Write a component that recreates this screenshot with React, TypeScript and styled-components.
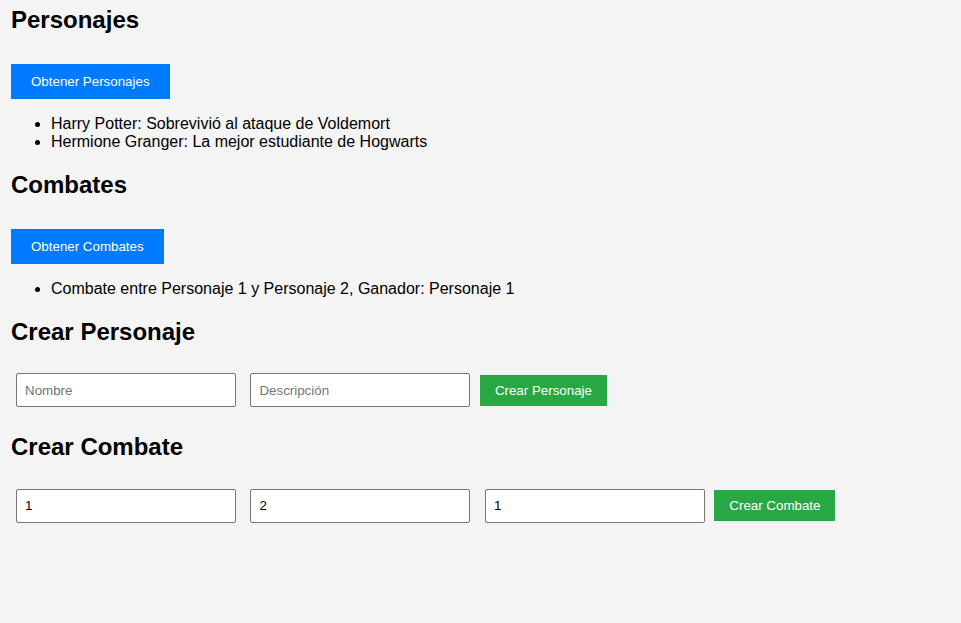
import React from "react";
import styled, { createGlobalStyle } from "styled-components";

const GlobalStyle = createGlobalStyle`
  html, body {
    margin: 0;
    padding: 0;
    background: #f4f4f4;
  }
  body {
    font-family: "Liberation Sans", Arial, sans-serif;
    color: #000;
    font-size: 16px;
  }
`;

const Page = styled.div`
  padding: 6px 11px 40px;
`;

const Section = styled.section`
  & + & {
    margin-top: 20px;
  }
`;

const Title = styled.h2`
  margin: 0;
  font-size: 24px;
  font-weight: bold;
  line-height: normal;
`;

const ActionButton = styled.button`
  display: block;
  margin: 30px 0 0;
  padding: 10px 20px;
  border: none;
  border-radius: 0;
  background: #007bff;
  color: #fff;
  font-family: "Liberation Sans", Arial, sans-serif;
  font-size: 13.333px;
  line-height: normal;
  cursor: pointer;
`;

const SubmitButton = styled.button`
  padding: 8px 15px;
  border: none;
  border-radius: 0;
  background: #28a745;
  color: #fff;
  font-family: "Liberation Sans", Arial, sans-serif;
  font-size: 13.333px;
  line-height: normal;
  cursor: pointer;
`;

const List = styled.ul`
  margin: 16px 0 0;
  padding-left: 40px;
  line-height: normal;
`;

const FormRow = styled.div`
  display: flex;
  align-items: center;
  gap: 4.45px;
  margin-top: 22.3px;
  margin-bottom: 21px;
`;

const Field = styled.input`
  box-sizing: border-box;
  width: 220px;
  height: 34px;
  margin: 5px;
  padding: 0 8px;
  border: 1px solid #767676;
  border-radius: 2px;
  background: #fff;
  color: #000;
  font-family: "Liberation Sans", Arial, sans-serif;
  font-size: 13.333px;
  outline: none;

  &::placeholder {
    color: #757575;
  }
`;

export default function App() {
  const personajes = [
    { nombre: "Harry Potter", descripcion: "Sobrevivió al ataque de Voldemort" },
    { nombre: "Hermione Granger", descripcion: "La mejor estudiante de Hogwarts" },
  ];
  const combates = [{ p1: 1, p2: 2, ganador: 1 }];

  return (
    <>
      <GlobalStyle />
      <Page>
        <Section>
          <Title>Personajes</Title>
          <ActionButton>Obtener Personajes</ActionButton>
          <List>
            {personajes.map((p) => (
              <li key={p.nombre}>
                {p.nombre}: {p.descripcion}
              </li>
            ))}
          </List>
        </Section>
        <Section>
          <Title>Combates</Title>
          <ActionButton>Obtener Combates</ActionButton>
          <List>
            {combates.map((c, i) => (
              <li key={i}>
                Combate entre Personaje {c.p1} y Personaje {c.p2}, Ganador: Personaje {c.ganador}
              </li>
            ))}
          </List>
        </Section>
        <Section>
          <Title>Crear Personaje</Title>
          <FormRow>
            <Field placeholder="Nombre" />
            <Field placeholder="Descripción" />
            <SubmitButton>Crear Personaje</SubmitButton>
          </FormRow>
        </Section>
        <Section>
          <Title>Crear Combate</Title>
          <FormRow>
            <Field defaultValue="1" />
            <Field defaultValue="2" />
            <Field defaultValue="1" />
            <SubmitButton>Crear Combate</SubmitButton>
          </FormRow>
        </Section>
      </Page>
    </>
  );
}
